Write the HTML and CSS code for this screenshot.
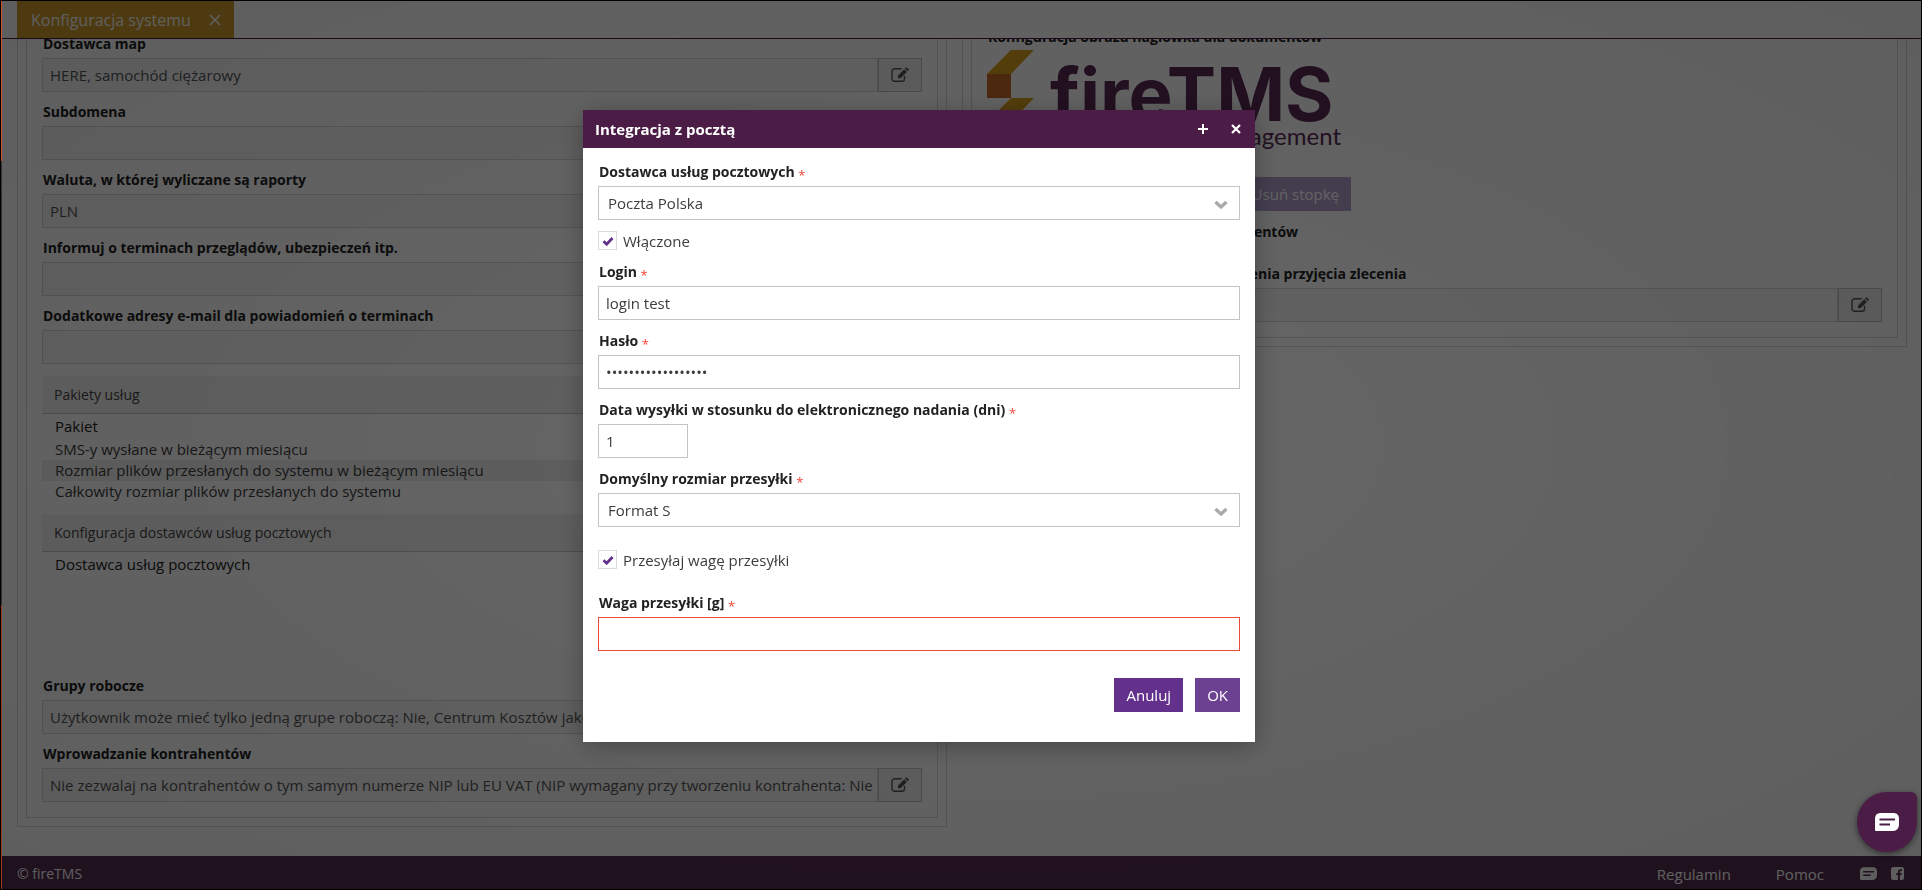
FILE: index.html
```
<!DOCTYPE html>
<html lang="pl">
<head>
    <meta charset="UTF-8">
    <meta name="viewport" content="width=device-width, initial-scale=1.0">
    <title>fireTMS</title>
    <link rel="stylesheet" href="styles.css">
</head>
<body>
    <svg width="0" height="0" class="sprite">
        <symbol id="edit" viewBox="0 0 18 16">
            <path d="M13.5 9.5v2.2a2.6 2.6 0 0 1-2.6 2.6H3.6A2.6 2.6 0 0 1 1 11.700V4.400a2.600 2.600 0 0 1 2.600-2.600h6.600" fill="none" stroke="currentColor" stroke-width="1.400" stroke-linecap="round"/>
            <path d="M7 8.600l6.300-6.300 2.600 2.600-6.300 6.300H7zM14 1.600l.8-.8c.4-.4 1-.4 1.400 0l1.200 1.200c.4.4.4 1 0 1.400l-.8.8z" fill="currentColor"/>
        </symbol>
        <symbol id="check" viewBox="0 0 12 10">
            <path d="M1.500 5.200l3.200 3L10.500 2" fill="none" stroke="currentColor" stroke-width="2.800"/>
        </symbol>
        <symbol id="chevron" viewBox="0 0 14 10">
            <path d="M1.500 2l5.500 5 5.500-5" fill="none" stroke="currentColor" stroke-width="3.400"/>
        </symbol>
        <symbol id="chat" viewBox="0 0 24 18">
            <path fill-rule="evenodd" fill="currentColor" d="M6 0h12c4 0 6 2 6 6v5c0 4-2 7-6 7H1.500C.5 18 0 17.500 0 16.500V6c0-4 2-6 6-6zM4.500 5.500v2H20v-2zM4.500 10.500v2H15v-2z"/>
        </symbol>
        <symbol id="facebook" viewBox="0 0 14 14">
            <path fill="currentColor" d="M2.500 0h9A2.500 2.500 0 0 1 14 2.500v9a2.500 2.500 0 0 1-2.500 2.500h-1.900V8.700h1.800l.3-2.100H9.600V5.300c0-.6.300-1 1.100-1h1.100V2.400l-1.600-.1c-1.700 0-2.800 1-2.800 2.700v1.600H5.600v2.100h1.800V14H2.500A2.500 2.500 0 0 1 0 11.500v-9A2.500 2.500 0 0 1 2.500 0z"/>
        </symbol>
    </svg>

    <div class="app">
        <header class="tabs">
            <div class="tab">
                <span>Konfiguracja systemu</span>
                <button type="button" class="tab-close" aria-label="Zamknij kartę">
                    <svg width="12" height="12" viewBox="0 0 12 12"><path d="M1 1l10 10M11 1L1 11" stroke="currentColor" stroke-width="1.500"/></svg>
                </button>
            </div>
        </header>

        <main class="content">
            <section class="panel">
                <div class="panel-inner">
                    <div class="field">
                        <label for="maps">Dostawca map</label>
                        <div class="field-row">
                            <input id="maps" type="text" value="HERE, samochód ciężarowy" readonly>
                            <button type="button" class="edit" aria-label="Edytuj"><svg width="18" height="16"><use href="#edit"/></svg></button>
                        </div>
                    </div>
                    <div class="field">
                        <label for="subdomain">Subdomena</label>
                        <div class="field-row">
                            <input id="subdomain" type="text" readonly>
                            <button type="button" class="edit" aria-label="Edytuj"><svg width="18" height="16"><use href="#edit"/></svg></button>
                        </div>
                    </div>
                    <div class="field">
                        <label for="currency">Waluta, w której wyliczane są raporty</label>
                        <div class="field-row">
                            <input id="currency" type="text" value="PLN" readonly>
                            <button type="button" class="edit" aria-label="Edytuj"><svg width="18" height="16"><use href="#edit"/></svg></button>
                        </div>
                    </div>
                    <div class="field">
                        <label for="reminders">Informuj o terminach przeglądów, ubezpieczeń itp.</label>
                        <div class="field-row">
                            <input id="reminders" type="text" readonly>
                            <button type="button" class="edit" aria-label="Edytuj"><svg width="18" height="16"><use href="#edit"/></svg></button>
                        </div>
                    </div>
                    <div class="field">
                        <label for="emails">Dodatkowe adresy e-mail dla powiadomień o terminach</label>
                        <div class="field-row">
                            <input id="emails" type="text" readonly>
                            <button type="button" class="edit" aria-label="Edytuj"><svg width="18" height="16"><use href="#edit"/></svg></button>
                        </div>
                    </div>

                    <table class="list">
                        <thead>
                            <tr><th>Pakiety usług</th></tr>
                        </thead>
                        <tbody>
                            <tr class="first"><td>Pakiet</td></tr>
                            <tr><td>SMS-y wysłane w bieżącym miesiącu</td></tr>
                            <tr class="odd"><td>Rozmiar plików przesłanych do systemu w bieżącym miesiącu</td></tr>
                            <tr><td>Całkowity rozmiar plików przesłanych do systemu</td></tr>
                        </tbody>
                    </table>
                    <table class="list providers">
                        <thead>
                            <tr><th>Konfiguracja dostawców usług pocztowych</th></tr>
                        </thead>
                        <tbody>
                            <tr class="first"><td>Dostawca usług pocztowych</td></tr>
                        </tbody>
                    </table>

                    <div class="field">
                        <label for="groups">Grupy robocze</label>
                        <div class="field-row">
                            <input id="groups" type="text" value="Użytkownik może mieć tylko jedną grupe roboczą: Nie, Centrum Kosztów jako grupa: Nie" readonly>
                            <button type="button" class="edit" aria-label="Edytuj"><svg width="18" height="16"><use href="#edit"/></svg></button>
                        </div>
                    </div>
                    <div class="field">
                        <label for="contractors">Wprowadzanie kontrahentów</label>
                        <div class="field-row">
                            <input id="contractors" type="text" value="Nie zezwalaj na kontrahentów o tym samym numerze NIP lub EU VAT (NIP wymagany przy tworzeniu kontrahenta: Nie" readonly>
                            <button type="button" class="edit" aria-label="Edytuj"><svg width="18" height="16"><use href="#edit"/></svg></button>
                        </div>
                    </div>
                </div>
            </section>

            <section class="panel images">
                <div class="panel-inner">
                    <h2>Konfiguracja obrazu nagłówka dla dokumentów</h2>
                    <svg class="logo" width="364" height="100" viewBox="0 0 364 100">
                        <path fill="#d9a01f" d="M24 0h23L24 24H0z"/>
                        <path fill="#c8692a" d="M0 24h24v24H0z"/>
                        <path fill="#d9a01f" d="M24 48h23L24 72H0z"/>
                        <text class="logo-name" x="63" y="71">fireTMS</text>
                        <text class="logo-sub" x="354" y="95" text-anchor="end">transport management</text>
                    </svg>
                    <div class="logo-actions">
                        <button type="button" class="light">Zmień stopkę</button>
                        <button type="button" class="light">Usuń stopkę</button>
                    </div>
                    <h2 class="footer-title">Konfiguracja obrazu stopki dla dokumentów</h2>
                    <div class="field">
                        <label for="confirm">Szablon wiadomości e-mail potwierdzenia przyjęcia zlecenia</label>
                        <div class="field-row">
                            <input id="confirm" type="text" readonly>
                            <button type="button" class="edit" aria-label="Edytuj"><svg width="18" height="16"><use href="#edit"/></svg></button>
                        </div>
                    </div>
                </div>
            </section>
        </main>

        <footer class="footer">
            <span>© fireTMS</span>
            <nav>
                <a href="#">Regulamin</a>
                <a href="#">Pomoc</a>
                <a href="#" class="icon-link" aria-label="Czat"><svg width="17" height="13"><use href="#chat"/></svg></a>
                <a href="#" class="icon-link" aria-label="Facebook"><svg width="13" height="13" viewBox="0 0 14 14"><use href="#facebook"/></svg></a>
            </nav>
        </footer>
    </div>

    <div class="overlay"></div>

    <div class="dialog" role="dialog" aria-labelledby="dialogTitle">
        <div class="dialog-header">
            <h1 id="dialogTitle">Integracja z pocztą</h1>
            <button type="button" aria-label="Powiększ"><svg width="12" height="12" viewBox="0 0 12 12"><path d="M6 1v10M1 6h10" stroke="currentColor" stroke-width="2"/></svg></button>
            <button type="button" aria-label="Zamknij"><svg width="12" height="12" viewBox="0 0 12 12"><path d="M2 2l8 8M10 2l-8 8" stroke="currentColor" stroke-width="2.200"/></svg></button>
        </div>
        <form class="dialog-body">
            <label class="title" for="provider">Dostawca usług pocztowych <i>*</i></label>
            <div class="select">
                <select id="provider"><option>Poczta Polska</option></select>
                <svg width="14" height="10"><use href="#chevron"/></svg>
            </div>
            <label class="check">
                <input type="checkbox" checked>
                <svg width="12" height="10"><use href="#check"/></svg>
                Włączone
            </label>
            <label class="title" for="login">Login <i>*</i></label>
            <input class="text" id="login" type="text" value="login test">
            <label class="title" for="password">Hasło <i>*</i></label>
            <input class="text" id="password" type="password" value="haslo-do-poczty-12">
            <label class="title" for="days">Data wysyłki w stosunku do elektronicznego nadania (dni) <i>*</i></label>
            <input class="text short" id="days" type="text" value="1">
            <label class="title" for="size">Domyślny rozmiar przesyłki <i>*</i></label>
            <div class="select">
                <select id="size"><option>Format S</option></select>
                <svg width="14" height="10"><use href="#chevron"/></svg>
            </div>
            <label class="check spaced">
                <input type="checkbox" checked>
                <svg width="12" height="10"><use href="#check"/></svg>
                Przesyłaj wagę przesyłki
            </label>
            <label class="title" for="weight">Waga przesyłki [g] <i>*</i></label>
            <input class="text error" id="weight" type="text">
            <div class="buttons">
                <button type="button">Anuluj</button>
                <button type="submit" class="ok">OK</button>
            </div>
        </form>
    </div>

    <button type="button" class="chat-button" aria-label="Otwórz czat"><svg width="24" height="18"><use href="#chat"/></svg></button>
</body>
</html>
```
FILE: styles.css
```
* {
    box-sizing: border-box;
}

body {
    margin: 0;
    font-family: "Open Sans", sans-serif;
    font-size: 15px;
    color: #3c3c3c;
    background: #000;
}

button,
input,
select {
    font-family: inherit;
    font-size: inherit;
    color: inherit;
    margin: 0;
}

button {
    cursor: pointer;
}

.sprite {
    position: absolute;
}

svg {
    display: block;
    flex: none;
}

.app {
    height: 100vh;
    display: flex;
    flex-direction: column;
    border: 1px solid #000;
    background: #fff;
    overflow: hidden;
}

/* tabs */
.tabs {
    display: flex;
    flex: none;
    height: 38px;
    padding-left: 16px;
    border-bottom: 1px solid #4a1c46;
}

.tab {
    display: flex;
    align-items: center;
    gap: 18px;
    padding: 0 13px 0 14px;
    background: #d09d2c;
    color: #fff;
    font-size: 16px;
}

.tab-close {
    padding: 0;
    border: 0;
    background: none;
    color: #fff;
}

/* page */
.content {
    flex: 1;
    min-height: 0;
    display: grid;
    grid-template-columns: 62fr 63fr;
    align-items: start;
    gap: 15px;
    padding: 0 14px 0 16px;
    overflow: hidden;
}

/* the page is scrolled, panel tops go under the tab bar */
.panel {
    min-width: 0;
    margin-top: -5px;
    padding: 0 8px 8px;
    border: 1px solid #dadada;
    border-top: 0;
}

.panel.images {
    margin-top: -12px;
}

.panel-inner {
    padding: 0 15px 15px;
    border: 1px solid #dadada;
    border-top: 0;
}

.field {
    margin-bottom: 10px;
}

.field:last-child {
    margin-bottom: 0;
}

.field label,
.panel h2 {
    display: block;
    margin: 0;
    padding-left: 1px;
    font-size: 14px;
    font-weight: bold;
    line-height: 20px;
    color: #222;
}

.field label {
    margin-bottom: 4px;
}

.field-row {
    display: flex;
    height: 34px;
}

.field-row input {
    flex: 1;
    min-width: 0;
    padding: 0 4px 0 7px;
    border: 1px solid #d8d8d8;
    background: #f6f6f6;
    color: #555;
}

.edit {
    display: flex;
    align-items: center;
    justify-content: center;
    width: 44px;
    padding: 0;
    border: 1px solid #c0c0c0;
    background: #f0f0f0;
    color: #555;
}

.list {
    width: 100%;
    margin: 12px 0;
    border-collapse: collapse;
}

.list th {
    height: 37px;
    padding: 0 12px;
    border-bottom: 1px solid #c8c8c8;
    background: #f2f2f2;
    font-size: 14px;
    font-weight: normal;
    text-align: left;
    color: #444;
}

.list td {
    height: 21px;
    padding: 0 13px;
    line-height: 21px;
}

.list .first td {
    height: 26px;
    color: #222;
}

.list .odd {
    background: #eee;
}

.list.providers {
    margin-bottom: 99px;
}

.logo {
    margin-top: 3px;
}

.logo text {
    fill: #5a2a55;
}

.logo-name {
    font-family: Inter, sans-serif;
    font-size: 74px;
    font-weight: 700;
}

.logo-sub {
    font-family: Lato, sans-serif;
    font-size: 24px;
}

.logo-actions {
    display: flex;
    justify-content: flex-end;
    gap: 12px;
    width: 364px;
    margin: 27px 0 11px;
}

.light {
    height: 34px;
    padding: 0 12px;
    border: 0;
    background: #b0a0cc;
    color: #fff;
}

.panel .footer-title {
    margin-bottom: 22px;
}

.footer {
    display: flex;
    flex: none;
    align-items: center;
    justify-content: space-between;
    height: 33px;
    padding: 2px 17px 0 16px;
    background: #572f52;
    color: #fff;
    font-size: 14px;
}

.footer nav {
    display: flex;
    align-items: center;
    font-size: 15px;
}

.footer a {
    margin-left: 45px;
    color: #fff;
    text-decoration: none;
}

.footer a.icon-link {
    margin-left: 14px;
}

.footer a + a.icon-link:nth-child(3) {
    margin-left: 36px;
}

.overlay {
    position: fixed;
    inset: 1px;
    background: radial-gradient(rgba(0, 0, 0, 0.6), rgba(0, 0, 0, 0.63));
}

.overlay::before {
    content: "";
    position: absolute;
    inset: 0 auto 0 0;
    width: 1px;
    background: linear-gradient(#d9502c 0, #d9502c 18%, #333 18%, #333 68%, #a03a1c 68%);
}

/* dialog */
.dialog {
    position: fixed;
    top: 110px;
    left: 583px;
    width: 672px;
    background: #fff;
    box-shadow: 0 4px 24px rgba(0, 0, 0, 0.3);
}

.dialog-header {
    display: flex;
    align-items: center;
    gap: 21px;
    height: 38px;
    padding: 0 13px 0 12px;
    background: #4a1c46;
    color: #fff;
}

.dialog-header h1 {
    flex: 1;
    margin: 0;
    font-size: 15px;
    font-weight: bold;
}

.dialog-header button {
    padding: 0;
    border: 0;
    background: none;
    color: #fff;
}

.dialog-body {
    padding: 14px 15px 30px;
}

.title {
    display: block;
    padding-left: 1px;
    margin-bottom: 4px;
    font-size: 14px;
    font-weight: bold;
    line-height: 20px;
    color: #222;
}

.title i {
    color: #f44336;
    font-size: 13px;
    font-style: normal;
    font-weight: normal;
    line-height: 1;
    vertical-align: -3px;
}

.text,
.select select {
    display: block;
    width: 100%;
    height: 34px;
    padding: 0 7px;
    border: 1px solid #c4c4c4;
    border-radius: 0;
    background: #fff;
}

.text {
    margin-bottom: 11px;
}

.text.short {
    width: 90px;
}

.text.error {
    border-color: #e74c3c;
    margin-bottom: 27px;
}

.select {
    position: relative;
    margin-bottom: 11px;
}

.select select {
    appearance: none;
    padding: 0 9px;
}

.select svg {
    position: absolute;
    top: 14px;
    right: 12px;
    color: #aaa;
    pointer-events: none;
}

.check {
    position: relative;
    display: flex;
    align-items: center;
    gap: 6px;
    height: 19px;
    margin-bottom: 12px;
}

.check input {
    appearance: none;
    width: 19px;
    height: 19px;
    border: 1px solid #e0d8e0;
}

.check svg {
    position: absolute;
    left: 4px;
    top: 5px;
    color: #63318c;
}

.check.spaced {
    margin: 23px 0 24px;
}

.buttons {
    display: flex;
    justify-content: flex-end;
    gap: 12px;
}

.buttons button {
    height: 34px;
    padding: 0 12px;
    border: 0;
    background: #63318c;
    color: #fff;
}

.buttons .ok {
    background: #6d4192;
}

.chat-button {
    position: fixed;
    right: 5px;
    bottom: 38px;
    display: flex;
    align-items: center;
    justify-content: center;
    width: 60px;
    height: 60px;
    padding: 0;
    border: 0;
    border-radius: 50% 6px 50% 50%;
    background: #4a1c46;
    color: #fff;
    box-shadow: 0 2px 6px rgba(0, 0, 0, 0.5);
}
```
